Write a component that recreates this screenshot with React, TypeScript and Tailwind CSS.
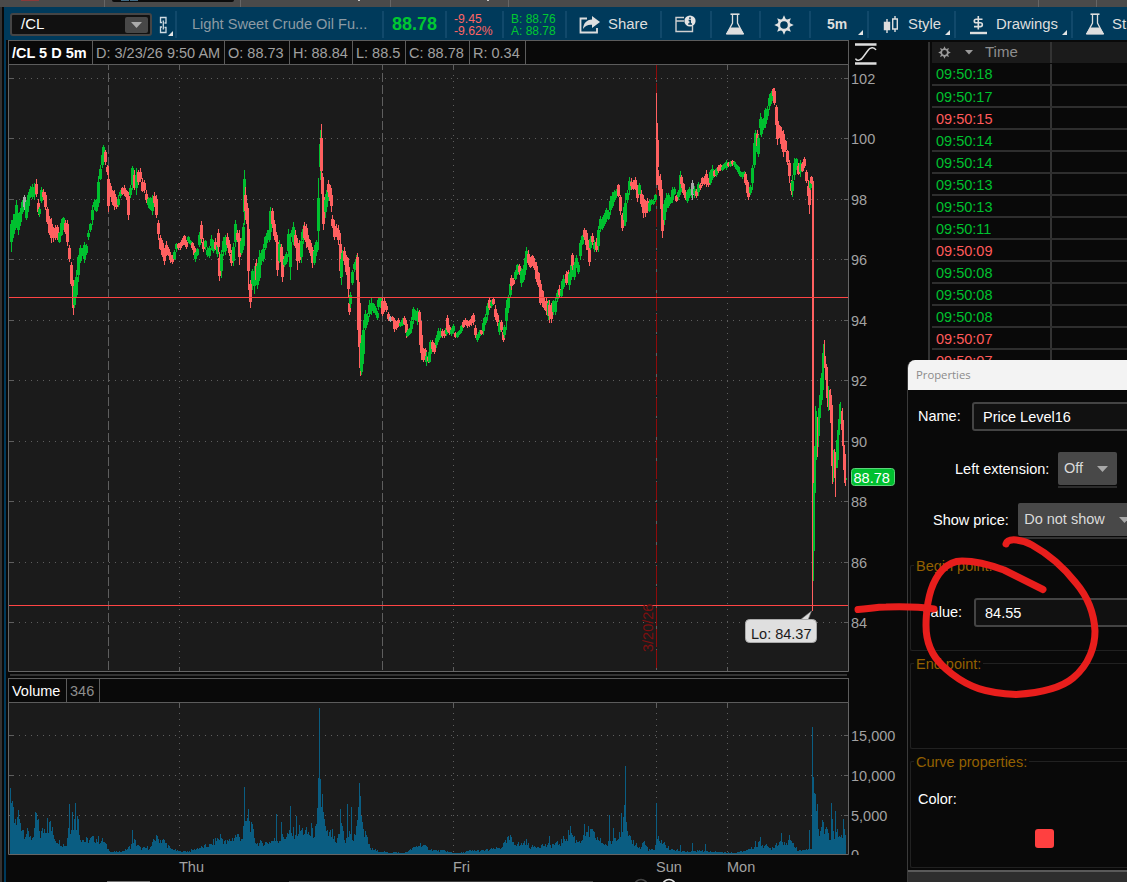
import type { ReactNode } from "react";

// each entry: x, high, low (plot pixels)
const PRICE_BARS = `
11 220 252,13 214 238,15 208 230,16 200 228,18 213 235,20 208 226,22 200 214,24 195 210,26 200 220,28 192 212,30 186 198,32 184 199,34 183 200,36 179 197,38 199 215,39 207 217,41 187 203,43 189 200,45 192 210,47 207 224,49 216 235,51 218 243,53 227 242,55 225 240,57 225 240,59 232 243,61 219 236,63 217 230,65 220 234,67 220 246,69 245 262,71 262 286,73 280 315,74 280 308,76 270 298,78 255 282,80 245 263,82 248 256,84 242 263,86 244 255,88 230 240,90 223 232,92 205 225,94 199 210,96 199 212,98 176 207,100 165 180,102 153 168,103 145 158,105 150 165,107 165 175,108 166 212,110 183 197,112 190 205,114 190 210,116 197 209,118 195 207,120 190 198,122 187 195,124 185 196,126 190 200,128 192 220,130 185 198,132 166 190,134 170 190,136 168 195,138 170 185,140 168 182,142 178 192,144 180 193,146 190 203,148 197 208,150 197 210,152 195 215,154 192 207,156 195 218,158 220 240,160 235 250,162 240 257,164 248 265,166 241 256,168 247 256,170 252 263,172 255 264,174 250 260,176 243 252,178 243 250,180 242 250,182 238 246,184 235 245,186 240 249,188 236 243,190 240 245,192 242 250,194 246 257,195 252 262,197 248 256,199 232 247,201 221 243,203 238 252,205 240 250,207 247 257,209 246 258,211 235 250,213 240 253,215 238 250,217 240 257,218 229 252,219 252 281,221 250 278,223 237 256,225 235 255,227 233 248,229 240 256,231 250 266,233 243 266,235 220 247,237 230 242,239 230 265,241 238 255,243 223 250,244 170 225,245 187 220,247 203 230,248 213 290,250 280 308,252 269 290,254 266 294,256 259 283,257 263 289,259 250 281,261 250 265,263 244 262,265 236 250,267 230 243,269 228 242,270 207 238,272 208 228,274 220 240,276 232 244,277 235 276,279 240 263,281 244 265,282 252 282,284 256 267,286 252 264,288 229 257,290 233 280,292 227 240,293 222 245,295 230 248,297 238 270,299 240 263,301 232 263,303 225 244,304 222 240,306 224 248,308 235 250,310 240 256,312 247 268,314 245 265,316 240 256,318 178 250,320 130 180,321 124 180,322 173 200,323 188 230,325 194 218,327 185 207,328 180 197,330 185 206,331 190 212,332 215 228,334 220 240,336 224 237,338 225 245,340 233 278,341 255 285,342 250 262,344 247 265,346 255 275,348 258 298,349 300 315,350 292 308,352 270 285,354 262 272,356 255 272,357 253 285,358 270 342,359 290 368,360 330 376,361 335 375,362 340 372,363 320 358,365 310 330,367 313 325,369 300 317,371 298 315,373 303 313,375 306 315,377 311 320,378 298 310,380 297 308,382 298 316,384 297 312,386 303 312,388 312 321,390 316 322,392 316 321,394 318 332,396 321 330,398 318 327,400 322 327,402 318 326,404 316 325,406 320 338,407 330 337,409 328 335,411 317 333,413 307 324,415 310 320,417 308 325,419 310 325,420 315 350,421 330 360,423 348 362,425 348 358,426 352 366,428 355 363,429 348 363,430 340 356,432 340 352,434 343 354,436 335 348,438 328 342,440 328 338,442 329 338,444 330 338,446 325 336,447 315 332,449 325 335,451 328 336,453 324 333,455 332 338,457 332 338,459 330 335,461 325 333,463 320 328,465 318 325,467 320 328,469 320 327,471 316 326,473 313 325,475 325 338,477 334 342,479 330 338,481 330 335,483 318 335,485 314 325,487 303 320,489 297 310,491 300 308,493 297 305,495 305 320,497 313 326,499 320 335,501 320 332,503 330 342,504 325 338,506 300 330,508 295 313,510 280 298,511 275 290,513 278 285,515 270 280,517 264 275,519 264 275,521 268 287,523 265 282,525 255 275,526 247 265,528 250 265,530 257 268,532 255 266,534 258 270,536 262 282,538 272 287,540 280 305,542 290 307,544 298 310,546 298 315,548 300 320,549 300 323,551 303 323,553 300 315,555 297 315,557 290 302,559 285 297,561 288 297,562 280 292,563 275 289,566 271 285,568 270 282,569 272 290,571 262 280,572 253 270,574 262 280,576 255 268,578 262 274,580 240 260,582 235 245,584 228 240,586 230 250,588 240 253,589 245 266,590 236 250,592 233 245,594 240 252,596 238 252,598 226 252,600 216 232,602 217 230,604 213 226,606 208 222,608 210 220,610 196 215,612 192 208,614 190 202,616 189 198,618 184 197,620 195 215,622 213 231,624 205 226,625 193 226,627 190 203,629 177 195,631 178 190,633 180 190,635 177 190,637 185 202,639 183 195,641 190 207,643 195 218,645 200 217,647 198 213,649 200 212,651 199 205,653 199 205,655 194 202,656 93 185,657 123 185,658 170 190,660 174 200,661 185 212,662 205 238,664 200 225,666 193 212,668 193 208,670 197 204,672 187 203,674 187 195,676 195 202,678 190 200,680 171 195,681 175 188,683 183 195,685 190 200,687 190 203,689 187 198,691 188 198,692 180 200,694 186 198,696 189 198,698 182 196,700 183 190,702 177 186,704 176 185,706 170 187,708 178 187,710 170 185,712 165 180,714 170 177,716 168 177,718 165 173,720 164 171,722 165 171,724 163 169,726 160 170,728 162 167,730 161 167,732 160 166,734 161 167,736 164 170,738 166 174,740 171 177,742 172 179,744 171 177,745 172 185,747 180 196,748 185 200,750 185 195,752 165 190,754 140 168,755 130 158,757 130 148,758 135 157,760 113 135,761 117 137,763 118 130,765 108 128,767 106 120,769 94 110,771 91 104,773 88 98,774 88 105,776 105 130,777 115 145,779 125 138,781 127 149,783 130 157,785 140 152,787 150 165,789 160 183,791 180 195,792 175 197,794 158 180,796 158 170,798 163 175,800 160 177,802 162 172,804 157 168,806 170 183,808 180 200,809 182 214,810 178 190,811 176 184`;

// the sell-off after the open, one column per bar; 1 = up, 0 = down
const SELLOFF: [number, number, number, number][] = [
    [812, 180, 611, 0], [813, 181, 483, 0], [813, 483, 581, 1], [814, 446, 551, 1], [815, 406, 493, 1],
    [816, 411, 460, 1], [817, 417, 457, 0], [818, 408, 447, 1], [819, 395, 436, 1], [820, 378, 418, 1],
    [821, 373, 405, 1], [822, 353, 400, 1], [823, 344, 390, 1], [824, 340, 368, 0], [825, 356, 380, 0],
    [826, 364, 398, 0], [827, 367, 407, 0], [828, 386, 411, 1], [829, 390, 410, 0], [830, 389, 423, 0],
    [831, 395, 466, 0], [832, 405, 484, 0], [833, 450, 482, 1], [834, 449, 478, 0], [835, 452, 497, 0],
    [836, 440, 468, 1], [837, 430, 468, 1], [838, 419, 460, 1], [839, 404, 435, 1], [840, 402, 424, 1],
    [841, 411, 430, 0], [842, 408, 446, 0], [843, 420, 470, 0], [844, 445, 483, 0], [845, 454, 486, 0],
    [846, 478, 480, 1],
];

const VOLUME_BASE = "10 50,14 30,20 30,24 20,30 18,33 12,36 34,40 18,46 26,50 25,55 14,62 9,66 8,68 24,72 28,78 32,80 15,85 12,95 14,103 12,107 6,110 2,120 2,125 4,130 7,133 13,140 5,150 6,155 14,162 13,170 5,180 2,190 3,200 6,210 8,220 16,226 10,236 17,242 15,244 30,250 28,256 10,265 10,280 14,288 18,300 22,310 18,316 22,318 50,322 40,326 18,332 18,336 8,341 30,345 12,350 20,353 10,358 40,364 20,370 5,380 2,404 1,410 4,420 9,430 4,437 3,445 3,452 1,460 1,470 3,480 3,490 4,500 6,505 10,508 14,512 12,520 8,525 12,530 6,540 8,550 8,560 10,570 20,576 12,585 15,590 20,600 12,606 8,612 12,620 22,625 30,628 14,636 9,640 5,643 12,648 4,654 4,658 15,664 9,670 4,690 2,700 3,715 2,735 1,745 3,755 7,760 10,770 5,780 12,790 10,794 9,798 3,808 4,811 6,812 90,816 42,819 24,825 25,830 13,836 22,840 18,845 18,846 1";
const VOLUME_SPIKES = "10 66,11 51,12 53,18 44,35 42,36 41,47 36,50 33,69 50,72 42,75 51,78 35,92 18,132 24,156 19,244 67,248 45,251 32,276 40,281 32,290 48,296 38,311 31,318 76,319 146,320 75,321 47,322 60,340 45,347 50,351 47,358 47,359 71,360 58,362 32,508 18,510 19,549 18,570 28,584 30,588 28,609 39,613 26,621 41,624 49,625 88,656 51,680 9,692 11,705 10,755 13,760 17,781 21,789 19,809 24,812 127,813 77,814 61,815 60,816 43,822 34,831 51,832 35,835 43,843 35,844 25";

const parse = (s: string) => s.trim().split(",").map((p) => p.trim().split(" ").map(Number));
const noise = (n: number) => {
    const v = Math.sin(n * 12.9898) * 43758.5453;
    return v - Math.floor(v);
};

const UP = "#00c02f";
const DOWN = "#ff6060";
const FLAT = "#a8a8a8";
const FORCED_DOWN = [219, 248, 250, 321, 322, 323, 656, 657, 658, 660, 661, 662];
const UNCHANGED = [24, 390, 692];

const bars = parse(PRICE_BARS);
const candles = bars.map(([x, hi, lo], i) => {
    const [, nhi, nlo] = bars[i + 1] ?? [x + 1, hi, lo];
    const [, phi, plo] = bars[i - 1] ?? [x, hi, lo];
    const slope = nhi + nlo - phi - plo;
    let up = slope < 0;
    if (Math.abs(slope) < 16 && noise(x) > 0.6) up = !up;
    if (FORCED_DOWN.includes(x)) up = false;
    const top = Math.round(hi + (lo - hi) * (0.08 + noise(x + 1) * 0.22));
    const bottom = Math.round(lo - (lo - hi) * (0.08 + noise(x + 2) * 0.22));
    const body = x === 656 ? "" : `M${x - 1} ${top}H${x + 2}V${bottom}H${x - 1}Z`;
    return {
        color: UNCHANGED.includes(x) ? FLAT : up ? UP : DOWN,
        d: `M${x} ${hi}H${x + 1}V${lo}H${x}Z${body}`,
    };
});
SELLOFF.forEach(([x, hi, lo, up]) => {
    candles.push({ color: up ? UP : DOWN, d: `M${x} ${hi}H${x + 1}V${lo}H${x}Z` });
});

const base = parse(VOLUME_BASE);
const spikes = new Map(parse(VOLUME_SPIKES).map(([x, h]) => [x, h]));
let volumePath = "";
for (let x = 10; x < 846; x++) {
    const k = base.findIndex(([bx]) => bx > x);
    const [x0, h0] = base[k - 1];
    const [x1, h1] = base[k];
    const mid = h0 + ((h1 - h0) * (x - x0)) / (x1 - x0);
    const h = spikes.get(x) ?? Math.round(mid * (0.75 + noise(x + 3) * 0.65));
    volumePath += `M${x}.5 854V${854 - h}`;
}

const PRICE_LEVELS = [102, 100, 98, 96, 94, 92, 90, 88, 86, 84];
const PRICE_Y = [78, 138, 199, 259, 320, 380, 441, 501, 562, 622];
const DAYS = [179, 453, 727];

const PriceChart = () => (
    <svg className="block shrink-0 font-['Liberation_Sans',Arial,sans-serif] text-[14.5px]" width="920" height="607" viewBox="8 65 920 607">
        <rect x="9" y="65" width="839" height="606" fill="#1b1b1b" />
        <g stroke="#5e5e5e">
            {PRICE_Y.map((y) => (
                <g key={y}>
                    <path d={`M9 ${y}.5H14M844 ${y}.5H848`} />
                    <path d={`M19 ${y}.5H843`} strokeDasharray="1 5" />
                </g>
            ))}
            {DAYS.map((x) => (
                <g key={x}>
                    <path d={`M${x}.5 65V70M${x}.5 667V671`} />
                    <path d={`M${x}.5 75V666`} strokeDasharray="1 5" />
                </g>
            ))}
            <path d="M108.5 65V671M382.5 65V671M656.5 65V671" strokeDasharray="9 3" strokeDashoffset="4" />
            <path d="M8.5 65V671.5H848.5V65" fill="none" stroke="#666" />
        </g>
        <path d="M656.5 65V671" stroke="#8e0b0b" strokeDasharray="18 3" strokeDashoffset="3" />
        <g shapeRendering="crispEdges">
            {candles.map((c, i) => (
                <path key={i} d={c.d} fill={c.color} />
            ))}
        </g>
        <path d="M9 297.5H848M9 605.5H848" stroke="#f44" />
        <text transform="translate(653 652) rotate(-90)" fill="#7c1010">3/20/26</text>

        <path d="M800 620L811.5 611L808 620" fill="#dcdcdc" stroke="#777" strokeWidth=".6" />
        <rect x="745.5" y="619.5" width="71" height="23" rx="4" fill="#dfdfdf" stroke="#aaa" />
        <text x="751" y="638.5" fill="#1b1b1b">Lo: 84.37</text>

        <g fill="#a2a2a2">
            {PRICE_LEVELS.map((p, i) => (
                <text key={p} x="851" y={PRICE_Y[i] + 5.5}>{p}</text>
            ))}
        </g>
        <rect x="851.5" y="468.5" width="43" height="17" rx="3" fill="#00c02f" stroke="#5cd47a" />
        <text x="853.5" y="483" fill="#fff">88.78</text>
    </svg>
);

const VolumeChart = () => (
    <svg className="block shrink-0 font-['Liberation_Sans',Arial,sans-serif] text-[14.5px]" width="920" height="179" viewBox="8 703 920 179">
        <rect x="9" y="703" width="839" height="151" fill="#1b1b1b" />
        <g stroke="#5e5e5e">
            {[735, 775, 815].map((y) => (
                <g key={y}>
                    <path d={`M9 ${y}.5H14M844 ${y}.5H848`} />
                    <path d={`M19 ${y}.5H843`} strokeDasharray="1 5" />
                </g>
            ))}
            {[179, 453, 656, 727].map((x) => (
                <g key={x}>
                    <path d={`M${x}.5 703V708`} />
                    <path d={`M${x}.5 713V853`} strokeDasharray="1 5" />
                </g>
            ))}
        </g>
        <path d={volumePath} stroke="#0a5d82" />
        <path d="M8.5 703V854.5H848.5V703" fill="none" stroke="#666" />
        <g fill="#a2a2a2">
            <text x="851" y="741">15,000</text>
            <text x="851" y="781">10,000</text>
            <text x="851" y="821">5,000</text>
            <svg x="849" y="845" width="30" height="10"><text x="2" y="15">0</text></svg>
            <text x="179" y="872">Thu</text>
            <text x="453" y="872">Fri</text>
            <text x="656" y="872">Sun</text>
            <text x="727" y="872">Mon</text>
        </g>
        <path d="M107 881.5H150" stroke="#707070" />
        <path d="M289 881.5H593" stroke="#404040" />
        <circle cx="641" cy="886" r="6.5" fill="none" stroke="#444" strokeWidth="1.5" />
        <circle cx="669" cy="886" r="6.5" fill="none" stroke="#ddd" strokeWidth="1.5" />
    </svg>
);

const GearIcon = ({ size, color }: { size: number, color: string }) => (
    <svg width={size} height={size} viewBox="0 0 20 20">
        {[0, 45, 90, 135, 180, 225, 270, 315].map((a) => (
            <path key={a} d="M7.8 5L10 .3L12.2 5Z" fill={color} transform={`rotate(${a} 10 10)`} />
        ))}
        <circle cx="10" cy="10" r="5" fill="none" stroke={color} strokeWidth="2.4" />
    </svg>
);

const FlaskIcon = () => (
    <svg width="20" height="23" viewBox="0 0 20 23" fill="none" stroke="#dedede">
        <path d="M5.5 1.2H14.5" strokeWidth="1.6" />
        <path d="M7.5 2V10L2 20.5H18L12.5 10V2" strokeWidth="1.3" />
        <path d="M5.2 15H14.8L18.6 21H1.4Z" fill="#dedede" />
    </svg>
);

const Corner = () => (
    <svg className="absolute right-1 bottom-[3px]" width="5" height="5"><path d="M5 0V5H0Z" fill="#e4e4e4" /></svg>
);

const Cell = ({ className, children }: { className: string, children: ReactNode }) => (
    <div className={`relative flex h-[27px] shrink-0 items-center border-l-2 border-[#11496b] ${className}`}>{children}</div>
);

const Toolbar = () => (
    <div className="flex h-[33px] items-center overflow-hidden bg-[#003a5b] pl-[6px] pt-[2px] text-[14.9px] whitespace-nowrap text-[#dedede]">
        <div className="flex h-[23px] w-[142px] shrink-0 items-center justify-between rounded-[3px] border-2 border-[#454545] bg-[#111] pr-[2px] pl-[9px] text-white">
            <span className="text-[15px]">/CL</span>
            <div className="flex h-4 w-[23px] items-center justify-center rounded-[2px] bg-[#484848]">
                <svg width="11" height="6"><path d="M0 0H11L5.5 6Z" fill="#aaa" /></svg>
            </div>
        </div>
        <div className="relative flex h-[27px] w-[23px] shrink-0 items-center justify-center">
            <svg width="9" height="18" viewBox="0 0 9 18" fill="none" stroke="#cfdbe2" strokeWidth="1.3">
                <path d="M3 6.5H1.500V1.500H7V7H5.500M3 11H1.500V16.500H7V11.500H5.500M4.300 4.500V13.500" />
            </svg>
            <svg className="absolute right-[2px] bottom-[2px]" width="5" height="5"><path d="M5 0V5H0Z" fill="#e4e4e4" /></svg>
        </div>
        <Cell className="w-[207px] pt-px pl-[15px] text-[14.6px] text-[#8d9ba4]">Light Sweet Crude Oil Fu...</Cell>
        <Cell className="w-[63px] pl-[8px] text-[18px] font-bold text-[#00c832]">88.78</Cell>
        <Cell className="w-[57px] pl-[7px] text-[12.2px] leading-3 text-[#ff6464]"><div>-9.45<br />-9.62%</div></Cell>
        <Cell className="w-[63px] pl-[7px] text-[12px] leading-3 text-[#00c832]"><div>B: 88.76<br />A: 88.78</div></Cell>
        <Cell className="w-[95px] gap-[8px] pl-[12px]">
            <svg width="21" height="18" viewBox="0 0 21 18" fill="none">
                <path d="M8 2.5H1.5V16.5H18V12" stroke="#dedede" strokeWidth="1.8" />
                <path d="M13 0L21 6L13 12V8.7C9 8.4 6.5 9.5 4 13C4.4 7.5 7.5 4 13 3.6Z" fill="#dedede" />
            </svg>
            Share
        </Cell>
        <Cell className="w-[50px] pl-[13px]">
            <svg className="-mt-px" width="21" height="18" viewBox="0 0 21 18" fill="none">
                <path d="M9 2.5H1V16.5H17.5V11M1 6H9" stroke="#d0d0d0" strokeWidth="1.4" />
                <circle cx="15" cy="6" r="5.6" fill="#e4e4e4" />
                <path d="M15 2.3V4M13.6 5.4H15.2V9M13.2 9H17" stroke="#003a5b" strokeWidth="1.5" />
            </svg>
        </Cell>
        <Cell className="w-[49px] pl-[13px]"><FlaskIcon /></Cell>
        <Cell className="w-[50px] pl-[13px]"><GearIcon size={20} color="#e2e2e2" /></Cell>
        <Cell className="w-[58px] pl-[16px] text-[14px] font-bold">5m<Corner /></Cell>
        <Cell className="w-[87px] gap-[9px] pl-[14px]">
            <svg width="16" height="18" viewBox="0 0 16 18" stroke="#dedede" strokeWidth="1.4">
                <path d="M4 3V17" />
                <path d="M1.5 6.5H6.5V13.5H1.5Z" fill="#dedede" />
                <path d="M12 0V3M12 13V16M9.7 3H14.3V13H9.7Z" fill="none" />
            </svg>
            Style<Corner />
        </Cell>
        <Cell className="w-[117px] gap-[9px] pl-[14px]">
            <svg width="17" height="20" viewBox="0 0 17 20" fill="none" stroke="#dedede">
                <path d="M12.5 4.2H6.2C3.6 4.2 3.6 7.8 6.2 7.8H10.3C13 7.8 13 11.6 10.3 11.6H4M8.3 1V14.500" strokeWidth="1.6" />
                <path d="M0 18H17" strokeWidth="2.4" />
            </svg>
            Drawings<Corner />
        </Cell>
        <Cell className="w-[90px] gap-[7px] pl-[12px]"><FlaskIcon />St</Cell>
    </div>
);

const HEADER = [
    { text: "D: 3/23/26 9:50 AM", width: "w-[132px]" },
    { text: "O: 88.73", width: "w-[65px]" },
    { text: "H: 88.84", width: "w-[63px]" },
    { text: "L: 88.5", width: "w-[53px]" },
    { text: "C: 88.78", width: "w-[64px]" },
    { text: "R: 0.34", width: "w-[56px]" },
];

const ChartHeader = () => (
    <div className="flex h-[25px] shrink-0">
        <div className="flex w-[841px] border border-[#5c5c5c] leading-[24px] whitespace-nowrap text-[#a0a0a0]">
            <div className="w-[84px] border-r border-[#5c5c5c] pl-[3px] font-bold text-white">/CL 5 D 5m</div>
            {HEADER.map((h) => (
                <div key={h.text} className={`${h.width} border-r border-[#5c5c5c] pl-[3px]`}>{h.text}</div>
            ))}
        </div>
        <svg className="mt-[3px] ml-[6px]" width="22" height="22" fill="none" stroke="#dedede">
            <path d="M0 1.5H21.5M0 20.5H21.5" strokeWidth="2.4" />
            <path d="M.5 15.5C2 18.5 6 17.5 8.5 13.5L12.5 8C15 4 19 3.5 21 7" strokeWidth="1.5" />
        </svg>
    </div>
);

const TRADES = [
    { time: "09:50:18", up: true }, { time: "09:50:17", up: true }, { time: "09:50:15", up: false },
    { time: "09:50:14", up: true }, { time: "09:50:14", up: true }, { time: "09:50:13", up: true },
    { time: "09:50:13", up: true }, { time: "09:50:11", up: true }, { time: "09:50:09", up: false },
    { time: "09:50:08", up: true }, { time: "09:50:08", up: true }, { time: "09:50:08", up: true },
    { time: "09:50:07", up: false }, { time: "09:50:07", up: false },
];

const TimeAndSales = () => (
    <div className="mt-[2px] flex flex-1 flex-col border-l-2 border-[#333] pl-[2px]">
        <div className="flex h-[21px] shrink-0 bg-[#1b1b1b] text-[#8e8e8e]">
            <div className="flex w-[120px] items-center border-r-2 border-[#333] pl-[6px] pb-px">
                <GearIcon size={13} color="#9a9a9a" />
                <svg className="ml-[14px]" width="8" height="5"><path d="M0 0H8L4 4.5Z" fill="#9a9a9a" /></svg>
                <span className="ml-[12px] pt-px text-[15px]">Time</span>
            </div>
        </div>
        {TRADES.map((t, i) => (
            <div key={i} className={`flex h-[22px] shrink-0 border-b-2 border-[#2e2e2e] ${i === 0 ? "mt-px leading-[21px]" : "leading-[23px]"}`}>
                <div className={`w-[120px] border-r-2 border-[#333] pl-[4px] ${t.up ? "text-[#00c02f]" : "text-[#ff5a5a]"}`}>
                    {t.time}
                </div>
            </div>
        ))}
    </div>
);

const Group = ({ title, className, children }: { title: string, className: string, children?: ReactNode }) => (
    <fieldset className={`ml-[2px] rounded-[2px] border border-r-0 border-[#212121] ${className}`}>
        <legend className="ml-[3px] h-[17px] px-[2px] leading-[19px] text-[#936000]">{title}</legend>
        {children}
    </fieldset>
);

const PropertiesDialog = () => (
    <div className="absolute top-[360px] left-[907px] h-[522px] w-[230px] overflow-hidden rounded-tl-lg border-l border-[#3a3a3a] bg-[#090909] whitespace-nowrap text-white">
        <div className="h-[30px] bg-[#f3f3f3] pl-[8px] font-['Open_Sans','Noto_Sans',sans-serif] text-[11.3px] leading-[30px] text-[#8b8b8b]">Properties</div>
        <div className="mt-[12px] flex h-[29px] items-center pl-[10px]">
            <span className="w-[54px] pt-px">Name:</span>
            <div className="h-[29px] flex-1 rounded-[3px] border-2 border-[#444] bg-[#111] pl-[9px] leading-[27px]">Price Level16</div>
        </div>
        <div className="mt-[21px] flex h-[35px] items-start pl-[47px]">
            <span className="w-[103px] leading-[34px]">Left extension:</span>
            <div className="h-[36px] w-[59px] border-b-2 border-[#2c2c2c]">
                <div className="flex h-[33px] items-center justify-between rounded-[2px] bg-[#484848] pr-[9px] pl-[6px] text-[#dadada]">
                    <span className="pt-px">Off</span>
                    <svg width="11" height="6"><path d="M0 0H11L5.5 6Z" fill="#a8a8a8" /></svg>
                </div>
            </div>
        </div>
        <div className="mt-[16px] flex h-[36px] items-start pl-[25px]">
            <span className="w-[86px] leading-[34px]">Show price:</span>
            <div className="h-[36px] w-[120px] border-b-2 border-[#333]">
                <div className="flex h-[33px] items-center gap-[14px] rounded-[2px] bg-[#484848] pl-[6px] text-[#dadada]">
                    <span className="pt-px">Do not show</span>
                    <svg width="11" height="6"><path d="M0 0H11L5.5 6Z" fill="#a8a8a8" /></svg>
                </div>
            </div>
        </div>
        <Group title="Begin point:" className="mt-[18px] h-[94px]">
            <div className="mt-[24px] flex h-[29px] items-center pl-[11px]">
                <span className="w-[52px] pt-px">Value:</span>
                <div className="h-[29px] flex-1 rounded-[3px] border-2 border-[#444] bg-[#111] pl-[9px] leading-[27px]">84.55</div>
            </div>
        </Group>
        <Group title="End point:" className="mt-[4px] h-[94px]" />
        <Group title="Curve properties:" className="mt-[4px] h-[115px]">
            <div className="mt-[19px] pl-[7px] leading-[20px]">Color:</div>
            <div className="mt-[20px] ml-[124px] size-[19px] rounded-[3px] bg-[#ff4040]" />
        </Group>
        <div className="mt-[2px] h-[20px] border-t-2 border-[#5a5a5a] bg-[#2e2e2e]" />
    </div>
);

const TabStrip = () => (
    <div className="flex h-[7px] shrink-0 bg-[#4a4a4a] pl-[4px]">
        <div className="w-[101px] border-r border-[#666] pl-[17px]"><div className="h-px w-[18px] bg-[#8a3a3a]" /></div>
        <div className="w-[136px] border-r border-[#666] pl-[7px]">
            <div className="flex h-[2px] w-[122px] gap-px rounded-b bg-[#0b0b0b] pl-[9px]">
                <div className="h-px w-[8px] bg-[#416b85]" />
                <div className="h-px w-[8px] bg-[#416b85]" />
            </div>
        </div>
        <div className="w-[150px] border-r border-[#666] pl-[117px]"><div className="h-px w-[2px] bg-[#ccc]" /></div>
        <div className="w-[118px] border-r border-[#666] pl-[96px]"><div className="h-px w-[2px] bg-[#ccc]" /></div>
        <div className="w-[530px] border-r border-[#666]" />
        <div className="w-[58px] border-r border-[#666]" />
    </div>
);

// hand-drawn marker strokes over the value field
const Marker = () => (
    <svg className="pointer-events-none absolute top-[530px] left-[850px]" width="260" height="175" viewBox="850 530 260 175" fill="none" stroke="#e81e1c" strokeLinecap="round" strokeLinejoin="round">
        <path d="M858 609.5C869 609 875 607 886 607C903 606.5 918 606.5 934 609" strokeWidth="7" />
        <path d="M1043 589.5L1004 570C988 564 975 561 962 561C946 561 936 575 931 590C926 606 925 627 927 637C930 653 938 663 952 674C969 687 985 693 1016 694.5C1038 693 1060 689 1073 678C1090 664 1095 645 1095 631C1094 612 1087 596 1076 583C1065 569 1050 555 1032 545C1023 540 1008 537 1006 544" strokeWidth="7" />
    </svg>
);

const App = () => {
    return (
        <div className="relative flex h-[882px] w-[1127px] flex-col overflow-hidden bg-[#090909] font-['Liberation_Sans',Arial,sans-serif] text-[14.5px]">
            <TabStrip />
            <div className="flex min-h-0 flex-1">
                <div className="w-[4px] shrink-0 border-l-2 border-[#333] bg-[#090909]" />
                <div className="flex min-w-0 flex-1 flex-col border-l-2 border-[#003a5b]">
                    <div className="-ml-[2px] shrink-0"><Toolbar /></div>
                    <div className="flex min-h-0 flex-1 pl-[2px]">
                        <div className="flex w-[920px] shrink-0 flex-col">
                            <ChartHeader />
                            <PriceChart />
                            <div className="mt-[2px] mb-[2px] ml-[2px] h-[2px] w-[837px] shrink-0 bg-[#333]" />
                            <div className="flex h-[25px] w-[841px] shrink-0 border border-[#5c5c5c] leading-[24px] text-[#8e8e8e]">
                                <div className="w-[58px] border-r border-[#5c5c5c] pl-[3px] text-white">Volume</div>
                                <div className="w-[33px] border-r border-[#5c5c5c] pl-[3px]">346</div>
                            </div>
                            <VolumeChart />
                        </div>
                        <TimeAndSales />
                    </div>
                </div>
            </div>
            <PropertiesDialog />
            <Marker />
        </div>
    );
};

export default App;
